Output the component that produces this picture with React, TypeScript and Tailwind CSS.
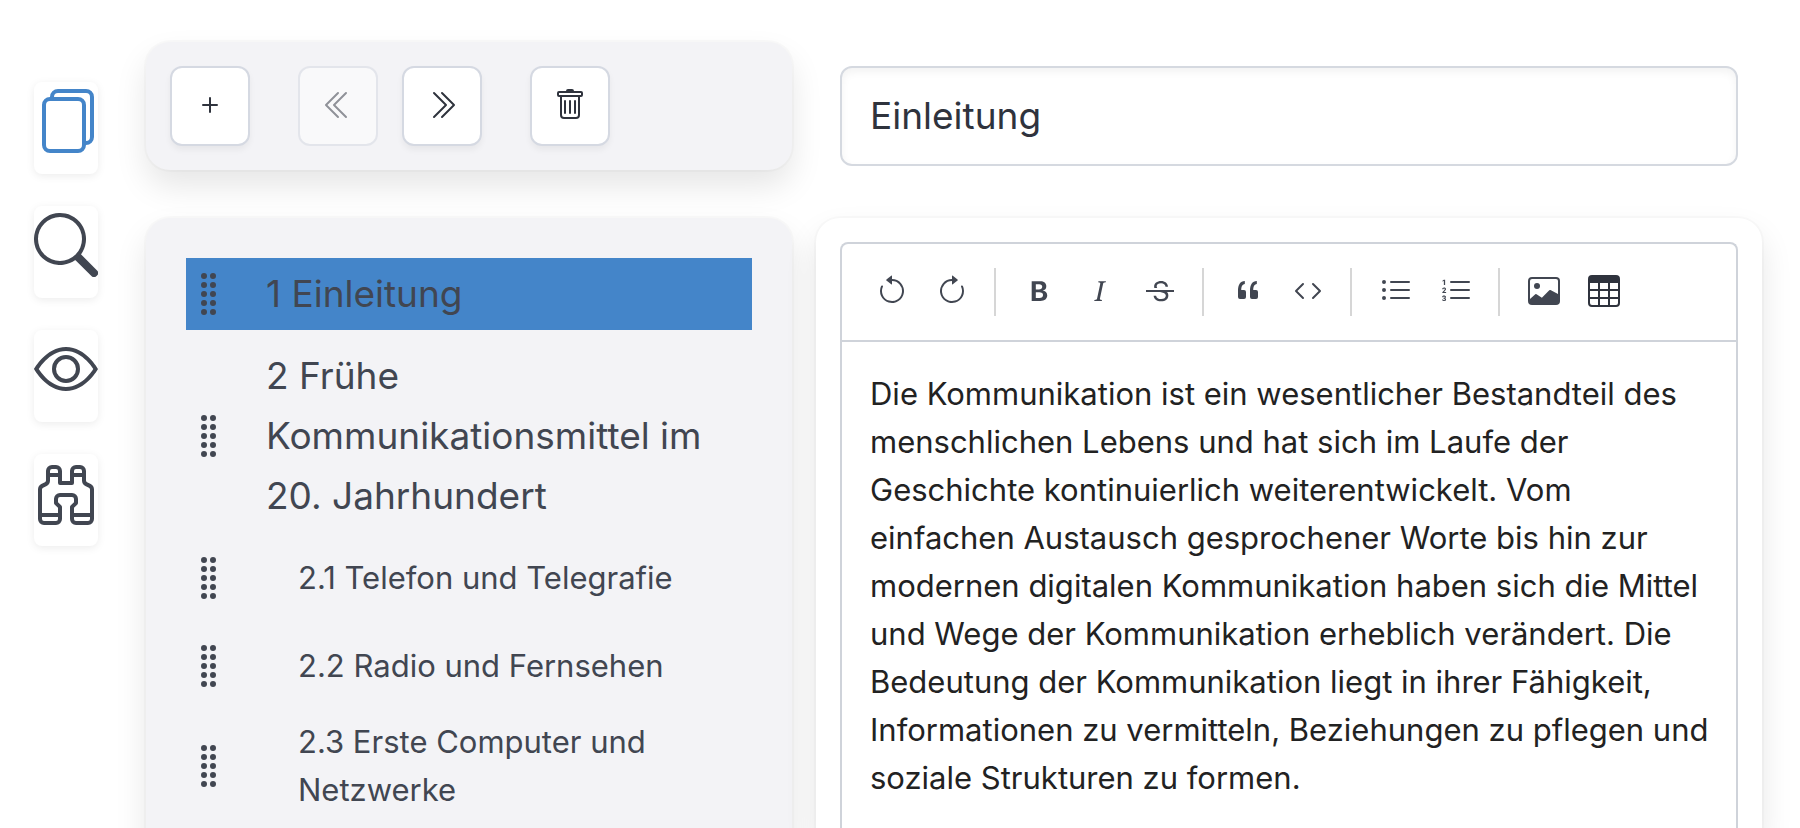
import type { ComponentType, ReactNode } from "react";
import {
  BsArrowClockwise,
  BsArrowCounterclockwise,
  BsBinoculars,
  BsChevronDoubleLeft,
  BsChevronDoubleRight,
  BsCode,
  BsEye,
  BsFiles,
  BsGripVertical,
  BsImage,
  BsListOl,
  BsListUl,
  BsPlus,
  BsQuote,
  BsSearch,
  BsTable,
  BsTrash,
  BsTypeBold,
  BsTypeItalic,
  BsTypeStrikethrough,
} from "react-icons/bs";

type Icon = ComponentType<{ className?: string }>;

const views: { label: string; icon: Icon; active?: boolean }[] = [
  { label: "Gliederung", icon: BsFiles, active: true },
  { label: "Suche", icon: BsSearch },
  { label: "Vorschau", icon: BsEye },
  { label: "Recherche", icon: BsBinoculars },
];

const sections: { title: string; level: number; active?: boolean }[] = [
  { title: "1 Einleitung", level: 1, active: true },
  { title: "2 Frühe Kommunikationsmittel im 20. Jahrhundert", level: 1 },
  { title: "2.1 Telefon und Telegrafie", level: 2 },
  { title: "2.2 Radio und Fernsehen", level: 2 },
  { title: "2.3 Erste Computer und Netzwerke", level: 2 },
];

const toolGroups: { label: string; icon: Icon; dark?: boolean }[][] = [
  [
    { label: "Rückgängig", icon: BsArrowCounterclockwise },
    { label: "Wiederholen", icon: BsArrowClockwise },
  ],
  [
    { label: "Fett", icon: BsTypeBold },
    { label: "Kursiv", icon: BsTypeItalic },
    { label: "Durchgestrichen", icon: BsTypeStrikethrough },
  ],
  [
    { label: "Zitat", icon: BsQuote },
    { label: "Code", icon: BsCode },
  ],
  [
    { label: "Liste", icon: BsListUl },
    { label: "Nummerierte Liste", icon: BsListOl },
  ],
  [
    { label: "Bild", icon: BsImage },
    { label: "Tabelle", icon: BsTable, dark: true },
  ],
];

function SquareButton({ label, disabled, children }: { label: string; disabled?: boolean; children: ReactNode }) {
  return (
    <button
      type="button"
      aria-label={label}
      disabled={disabled}
      className="flex size-20 items-center justify-center rounded-xl border-2 border-[#d5d9e2] bg-white pb-0.5 text-[#2f333d] shadow-[0_4px_6px_rgba(0,0,0,0.05)] disabled:opacity-50 disabled:shadow-none"
    >
      {children}
    </button>
  );
}

export default function App() {
  return (
    <div className="flex h-screen overflow-hidden bg-white font-['Inter','Liberation_Sans',sans-serif] text-[#414651]">
      <nav aria-label="Ansichten" className="flex w-[146px] shrink-0 flex-col items-center gap-8 pt-[82px] pr-3.5">
        {views.map(({ label, icon: ViewIcon, active }) => (
          <button
            key={label}
            type="button"
            aria-label={label}
            className={
              active
                ? "h-[92px] rounded-lg bg-white pb-3.5 text-[#4485c9] shadow-[0_2px_8px_rgba(0,0,0,0.08)]"
                : "h-[92px] rounded-lg bg-white pb-3.5 shadow-[0_2px_8px_rgba(0,0,0,0.08)]"
            }
          >
            <ViewIcon className="size-16" />
          </button>
        ))}
      </nav>

      <aside className="flex w-[646px] shrink-0 flex-col gap-12 pt-[42px]">
        <div className="flex shrink-0 rounded-3xl bg-[#f3f3f6] p-6 shadow-[0_0_0_2px_rgba(0,0,0,0.02),0_16px_32px_rgba(0,0,0,0.1)]">
          <SquareButton label="Hinzufügen">
            <BsPlus className="size-8" />
          </SquareButton>
          <div className="mx-12 flex gap-6">
            <SquareButton label="Ausrücken" disabled>
              <BsChevronDoubleLeft className="size-8" />
            </SquareButton>
            <SquareButton label="Einrücken">
              <BsChevronDoubleRight className="size-8" />
            </SquareButton>
          </div>
          <SquareButton label="Löschen">
            <BsTrash className="size-8" />
          </SquareButton>
        </div>

        <ul className="flex flex-1 flex-col gap-4 rounded-t-3xl bg-[#f3f3f6] p-10 shadow-[0_0_0_2px_rgba(0,0,0,0.02),0_16px_32px_rgba(0,0,0,0.1)]">
          {sections.map(({ title, level, active }) => (
            <li
              key={title}
              className={active ? "flex min-h-[72px] items-center bg-[#4485c9]" : "flex min-h-[72px] items-center"}
            >
              <BsGripVertical className="size-12 shrink-0" />
              <a
                href="#"
                className={
                  level === 1
                    ? "ml-8 flex-1 text-[37px] leading-[60px]"
                    : "ml-16 flex-1 text-[31px] leading-[48px]"
                }
              >
                {title}
              </a>
            </li>
          ))}
        </ul>
      </aside>

      <main className="mr-[38px] ml-6 flex min-w-0 flex-1 flex-col pt-[66px]">
        <input
          aria-label="Titel"
          defaultValue="Einleitung"
          className="mx-6 h-[100px] shrink-0 rounded-xl border-2 border-[#d5d9e0] bg-white px-7 pb-0.5 text-[37px] text-[#2f333d] shadow-[inset_0_4px_8px_rgba(0,0,0,0.05)] outline-none"
        />
        <div className="mt-[52px] flex flex-1 flex-col rounded-t-3xl bg-white px-6 pt-6 shadow-[0_0_0_2px_rgba(0,0,0,0.02),0_16px_32px_rgba(0,0,0,0.1)]">
          <div className="flex flex-1 flex-col rounded-t-lg border-2 border-b-0 border-[#cfd3da]">
            <div role="toolbar" aria-label="Formatierung" className="flex h-[98px] items-center border-b-2 border-[#cfd3da] px-5">
              {toolGroups.map((group, i) => (
                <div
                  key={i}
                  className={i === 0 ? "flex h-12 items-center" : "ml-3 flex h-12 items-center border-l-2 border-[#d6d6d6] pl-3.5"}
                >
                  {group.map(({ label, icon: ToolIcon, dark }) => (
                    <button
                      key={label}
                      type="button"
                      aria-label={label}
                      className={
                        dark
                          ? "flex h-12 w-[60px] items-center justify-center pb-0.5 text-[#2f333d]"
                          : "flex h-12 w-[60px] items-center justify-center pb-0.5"
                      }
                    >
                      <ToolIcon className="size-8" />
                    </button>
                  ))}
                </div>
              ))}
            </div>
            <p
              contentEditable
              suppressContentEditableWarning
              className="py-7 pr-6 pl-7 text-[31px] leading-[48px] text-[#222] outline-none"
            >
              Die Kommunikation ist ein wesentlicher Bestandteil des menschlichen Lebens und hat sich im Laufe der
              Geschichte kontinuierlich weiterentwickelt. Vom einfachen Austausch gesprochener Worte bis hin zur
              modernen digitalen Kommunikation haben sich die Mittel und Wege der Kommunikation erheblich verändert.
              Die Bedeutung der Kommunikation liegt in ihrer Fähigkeit, Informationen zu vermitteln, Beziehungen zu
              pflegen und soziale Strukturen zu formen.
            </p>
          </div>
        </div>
      </main>
    </div>
  );
}
